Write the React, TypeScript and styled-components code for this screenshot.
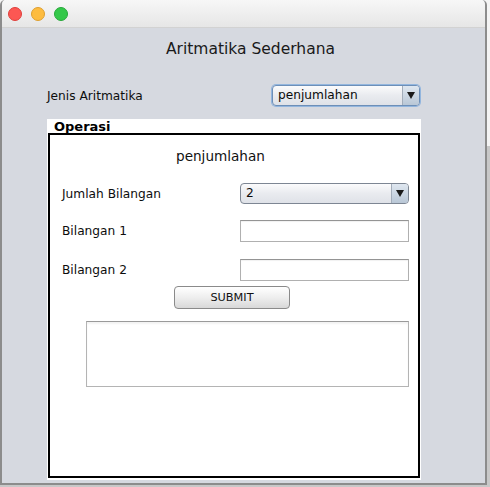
import React from "react";
import styled, { createGlobalStyle } from "styled-components";

const Global = createGlobalStyle`
  html, body { margin: 0; padding: 0; }
  body {
    background: #9a9a9a;
    width: 490px;
    height: 487px;
    overflow: hidden;
    font-family: "DejaVu Sans", "Liberation Sans", sans-serif;
  }
`;

const Screen = styled.div`
  display: flex;
  width: 490px;
  height: 487px;
  background: linear-gradient(#f4f4f4 0 30%, #c8c8c8 30% 100%);
`;

const Window = styled.div`
  width: 483px;
  height: 483px;
  display: flex;
  flex-direction: column;
  border: 1px solid #8c8c8c;
  border-width: 0 2px 2px 2px;
  border-radius: 5px 5px 0 0;
  overflow: hidden;
  background: #d6d9e0;
`;

const TitleBar = styled.div`
  height: 27px;
  flex: none;
  display: flex;
  align-items: center;
  gap: 9px;
  padding-left: 6px;
  background: linear-gradient(#f7f7f7, #e6e6e6);
  border-bottom: 1px solid #d2d2d2;
`;

const Light = styled.span<{ $c: string; $b: string }>`
  width: 14px;
  height: 14px;
  border-radius: 50%;
  background: ${(p) => p.$c};
  border: 0.5px solid ${(p) => p.$b};
  box-sizing: border-box;
`;

const Body = styled.div`
  flex: 1;
  display: flex;
  flex-direction: column;
  padding-left: 45px;
`;

const Heading = styled.div`
  margin-top: 11px;
  height: 20px;
  line-height: 20px;
  font-size: 15.5px;
  color: #1a1a1a;
  padding-left: 119px;
`;

const TopRow = styled.div`
  margin-top: 26px;
  display: flex;
  align-items: center;
  height: 21px;
`;

const Label = styled.span<{ $w: number }>`
  width: ${(p) => p.$w}px;
  flex: none;
  font-size: 12.2px;
  color: #0d0d0d;
`;

const Combo = styled.div<{ $w: number; $focus?: boolean }>`
  width: ${(p) => p.$w}px;
  height: 21px;
  box-sizing: border-box;
  display: flex;
  border: 1px solid ${(p) => (p.$focus ? "#6d8fb8" : "#7d8693")};
  border-radius: 4px;
  background: linear-gradient(#fbfbfc, #e9ebef 50%, #dfe2e8);
  box-shadow: ${(p) => (p.$focus ? "0 0 0 1px #93b6de" : "none")};
  overflow: hidden;
`;

const ComboText = styled.span`
  flex: 1;
  padding-left: 5px;
  font-size: 12.2px;
  line-height: 19px;
  color: #0a0a0a;
`;

const ArrowBox = styled.span`
  width: 16px;
  flex: none;
  border-left: 1px solid #a3adba;
  background: linear-gradient(#dfe7f0, #b9c7d6);
  display: flex;
  align-items: center;
  justify-content: center;
`;

const Panel = styled.div`
  margin-top: 13px;
  width: 374px;
  height: 361px;
  background: #fff;
  display: flex;
  flex-direction: column;
`;

const Legend = styled.div`
  height: 14px;
  line-height: 15px;
  padding-left: 7px;
  font-size: 13px;
  font-weight: bold;
  color: #000;
`;

const Box = styled.div`
  margin: 0 1px 2px 1px;
  flex: 1;
  border: 2px solid #000;
  display: flex;
  flex-direction: column;
`;

const OpTitle = styled.div`
  margin-top: 12px;
  height: 18px;
  line-height: 18px;
  padding-left: 126px;
  font-size: 13.6px;
  color: #111;
`;

const Row = styled.div<{ $top: number }>`
  display: flex;
  align-items: center;
  margin-top: ${(p) => p.$top}px;
  padding-left: 12px;
`;

const Field = styled.div`
  width: 169px;
  height: 22px;
  box-sizing: border-box;
  border: 1px solid #b0b0b0;
  border-top-color: #949494;
  background: #fff;
  box-shadow: inset 0 1px 1px rgba(0, 0, 0, 0.06);
`;

const ButtonRow = styled.div`
  margin-top: 5px;
  padding-left: 124px;
`;

const Button = styled.button`
  width: 116px;
  height: 23px;
  box-sizing: border-box;
  border: 1px solid #8a8a8a;
  border-radius: 4px;
  background: linear-gradient(#ffffff, #eeeeee 50%, #d8d8d8);
  font-family: "DejaVu Sans", "Liberation Sans", sans-serif;
  font-size: 11.3px;
  color: #111;
  padding: 0;
`;

const TextArea = styled.div`
  margin: 12px 0 0 36px;
  width: 323px;
  height: 66px;
  box-sizing: border-box;
  border: 1px solid #b4b4b4;
  border-top-color: #9a9a9a;
  box-shadow: inset 0 2px 2px rgba(0, 0, 0, 0.05);
  background: #fff;
`;

const Arrow = () => (
  <svg width="8" height="7" viewBox="0 0 8 7">
    <path d="M0 0 H8 L4 7 Z" fill="#1a1a1a" />
  </svg>
);

export default function App() {
  return (
    <>
      <Global />
      <Screen>
        <Window>
          <TitleBar>
            <Light $c="#fc5753" $b="#df3f3b" />
            <Light $c="#fdbc40" $b="#de9f2f" />
            <Light $c="#34c84a" $b="#27a83a" />
          </TitleBar>
          <Body>
            <Heading>Aritmatika Sederhana</Heading>
            <TopRow>
              <Label $w={225}>Jenis Aritmatika</Label>
              <Combo $w={148} $focus>
                <ComboText>penjumlahan</ComboText>
                <ArrowBox>
                  <Arrow />
                </ArrowBox>
              </Combo>
            </TopRow>
            <Panel>
              <Legend>Operasi</Legend>
              <Box>
                <OpTitle>penjumlahan</OpTitle>
                <Row $top={18}>
                  <Label $w={178}>Jumlah Bilangan</Label>
                  <Combo $w={169}>
                    <ComboText>2</ComboText>
                    <ArrowBox>
                      <Arrow />
                    </ArrowBox>
                  </Combo>
                </Row>
                <Row $top={16}>
                  <Label $w={178}>Bilangan 1</Label>
                  <Field />
                </Row>
                <Row $top={17}>
                  <Label $w={178}>Bilangan 2</Label>
                  <Field />
                </Row>
                <ButtonRow>
                  <Button>SUBMIT</Button>
                </ButtonRow>
                <TextArea />
              </Box>
            </Panel>
          </Body>
        </Window>
      </Screen>
    </>
  );
}
